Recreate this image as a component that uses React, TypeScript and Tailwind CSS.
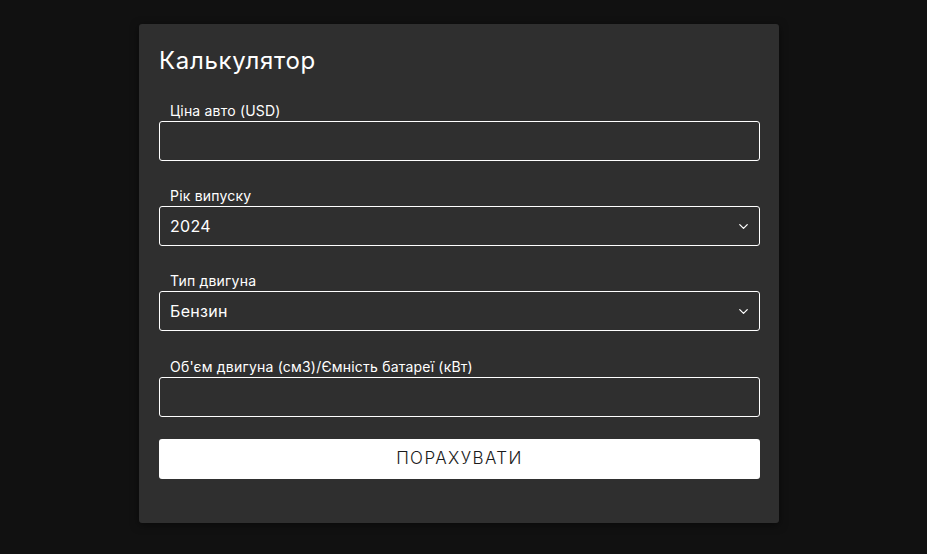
import { ChevronDown } from "lucide-react"

function Field({ label, children, className = "" }: { label: string; children: React.ReactNode; className?: string }) {
  return (
    <div className={"flex flex-col " + className}>
      <label className="pl-[11px] text-[14px] leading-[17px] tracking-[0.2px] text-white mb-[2px]">{label}</label>
      {children}
    </div>
  )
}

function Select({ value }: { value: string }) {
  return (
    <div className="h-[40px] border border-white rounded-[3px] flex items-center justify-between pl-[10px] pr-[8px] text-[16px] tracking-[0.3px] text-white">
      <span>{value}</span>
      <ChevronDown size={15} strokeWidth={2} className="text-white" />
    </div>
  )
}

export default function App() {
  return (
    <div
      className="min-h-[554px] w-full bg-[#111111] flex justify-center pt-[24px] pr-[9px]"
      style={{ fontFamily: "Inter, 'Noto Sans', sans-serif" }}
    >
      <div className="w-[640px] h-[499px] bg-[#2f2f2f] rounded-[3px] shadow-[0_2px_8px_rgba(0,0,0,0.5)] pl-[20px] pr-[19px] pt-[49px]">
        <h1 className="text-[24px] leading-[32px] tracking-[0.7px] text-white -mt-[28px] mb-[25px]">Калькулятор</h1>
        <div className="flex flex-col gap-[26px]">
          <Field label="Ціна авто (USD)">
            <input className="h-[40px] border border-white rounded-[3px] bg-transparent outline-none text-white px-[10px]" />
          </Field>
          <Field label="Рік випуску">
            <Select value="2024" />
          </Field>
          <Field label="Тип двигуна">
            <Select value="Бензин" />
          </Field>
          <Field label="Об'єм двигуна (см3)/Ємність батареї (кВт)" className="mt-[1px]">
            <input className="h-[40px] border border-white rounded-[3px] bg-transparent outline-none text-white px-[10px]" />
          </Field>
        </div>
        <button className="mt-[22px] w-full h-[40px] bg-white rounded-[3px] text-[17px] font-light text-[#1a1a1a] tracking-[1.4px]">
          ПОРАХУВАТИ
        </button>
      </div>
    </div>
  )
}
